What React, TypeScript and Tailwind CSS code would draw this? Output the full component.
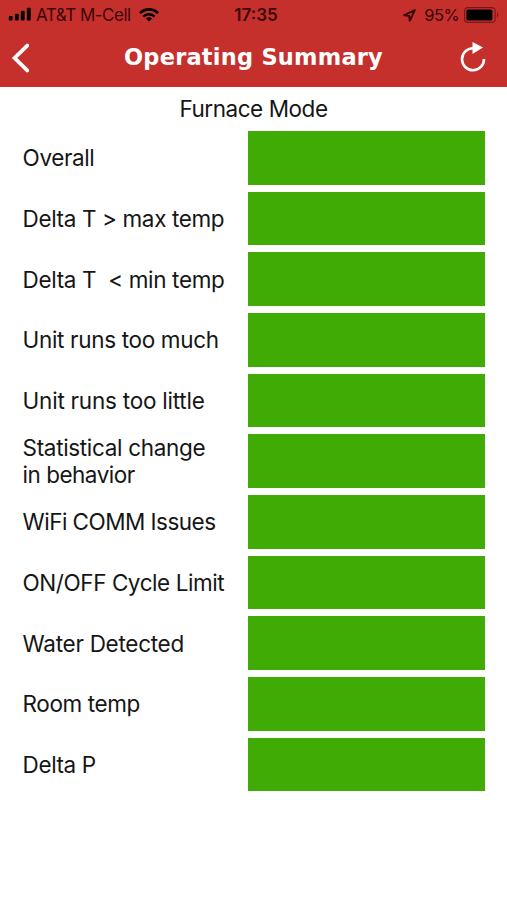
interface Check {
  lines: { text: string; tracking: string }[];
  ok: boolean;
}

const CHECKS: Check[] = [
  { lines: [{ text: 'Overall', tracking: 'tracking-[-0.4px]' }], ok: true },
  { lines: [{ text: 'Delta T > max temp', tracking: 'tracking-[-0.37px]' }], ok: true },
  { lines: [{ text: 'Delta T  < min temp', tracking: 'tracking-[-0.35px]' }], ok: true },
  { lines: [{ text: 'Unit runs too much', tracking: 'tracking-[-0.33px]' }], ok: true },
  { lines: [{ text: 'Unit runs too little', tracking: 'tracking-[-0.23px]' }], ok: true },
  {
    lines: [
      { text: 'Statistical change', tracking: 'tracking-[-0.33px]' },
      { text: 'in behavior', tracking: 'tracking-[-0.5px]' },
    ],
    ok: true,
  },
  { lines: [{ text: 'WiFi COMM Issues', tracking: 'tracking-[-0.53px]' }], ok: true },
  { lines: [{ text: 'ON/OFF Cycle Limit', tracking: 'tracking-[-0.44px]' }], ok: true },
  { lines: [{ text: 'Water Detected', tracking: 'tracking-[-0.28px]' }], ok: true },
  { lines: [{ text: 'Room temp', tracking: 'tracking-[-0.4px]' }], ok: true },
  { lines: [{ text: 'Delta P', tracking: 'tracking-[-0.4px]' }], ok: true },
];

function StatusBar() {
  return (
    <div className="grid h-[30px] grid-cols-[1fr_auto_1fr] items-center pl-2 pr-[7px] text-[17px] leading-none text-[#3a0505]">
      <div className="flex items-center">
        <svg className="mb-0.5 h-[14px] w-6" viewBox="0 0 24 14" fill="#000">
          <rect x="0.8" y="9" width="3.8" height="4.6" rx="1" />
          <rect x="6.9" y="6.8" width="3.8" height="6.8" rx="1" />
          <rect x="12.8" y="3.8" width="3.8" height="9.8" rx="1" />
          <rect x="18.9" y="0.8" width="3.8" height="12.8" rx="1" />
        </svg>
        <span className="ml-1 whitespace-nowrap tracking-[-0.5px]">AT&amp;T M-Cell</span>
        <svg className="mb-px ml-2 h-[14px] w-5" viewBox="0 0 20 14" fill="none" stroke="#000" strokeWidth="2.6">
          <path d="M1 5.2a12.6 12.6 0 0 1 18 0" />
          <path d="M4.4 8.6a8 8 0 0 1 11.2 0" />
          <path d="M10 13.6 6.9 10.6a4.4 4.4 0 0 1 6.2 0z" fill="#000" stroke="none" />
        </svg>
      </div>
      <span className="ml-1 font-semibold">17:35</span>
      <div className="flex items-center justify-end">
        <svg className="h-[13px] w-[13px]" viewBox="0 0 13 13" fill="none" stroke="#3a0505" strokeWidth="1.9" strokeLinejoin="round">
          <path d="M11.8 1.2 1.2 6.2l5 .7.6 5z" />
        </svg>
        <span className="ml-2 text-[16.5px] tracking-[-0.6px]">95%</span>
        <svg className="ml-[5px] h-4 w-9" viewBox="0 0 36 16">
          <rect x="0.6" y="0.6" width="30.5" height="14.8" rx="3.2" fill="none" stroke="#7c1717" strokeWidth="1.2" />
          <rect x="2.4" y="2.4" width="26" height="11.2" rx="1.5" fill="#000" />
          <path d="M33 5.5c1.8.5 1.8 4.5 0 5z" fill="#7c1717" />
        </svg>
      </div>
    </div>
  );
}

function Header() {
  return (
    <header className="h-[87px] bg-[#c5302d]">
      <StatusBar />
      <div className="flex h-[55px] items-center pl-[11px] pr-5">
        <button aria-label="Back">
          <svg className="h-[30px] w-[18px]" viewBox="0 0 18 30" fill="none" stroke="#fff" strokeWidth="3.8">
            <path d="M16.2 2.6 3.6 15l12.6 12.4" strokeLinecap="round" />
          </svg>
        </button>
        <h1 className="ml-[95px] whitespace-nowrap font-['DejaVu_Sans',sans-serif] text-[22.5px] font-bold leading-none tracking-[0.22px] text-white">
          Operating Summary
        </h1>
        <button aria-label="Refresh" className="mb-0.5 ml-auto">
          <svg className="h-[30px] w-7" viewBox="0 0 28 30">
            <path d="M14.2 6.2A11 11 0 1 0 25 17" fill="none" stroke="#fff" strokeWidth="2.6" />
            <path d="M13.5 0 24 5.6 13.5 12z" fill="#fff" />
          </svg>
        </button>
      </div>
    </header>
  );
}

export default function App() {
  return (
    <div className="h-[900px] w-[507px] overflow-hidden bg-white font-['Inter',sans-serif] text-[#161616]">
      <Header />
      <main>
        <h2 className="flex h-11 items-center justify-center text-[22.5px] leading-none tracking-[-0.45px]">
          <span>Furnace Mode</span>
        </h2>
        <ul className="flex flex-col gap-[7px] pl-[22.6px] pr-[22px]">
          {CHECKS.map((check) => (
            <li key={check.lines[0].text} className="flex h-[53.67px] items-center justify-between">
              <div className="text-[22.5px] leading-[27px]">
                {check.lines.map((line) => (
                  <p key={line.text} className={`whitespace-pre ${line.tracking}`}>
                    {line.text}
                  </p>
                ))}
              </div>
              <div className={`h-full w-[237px] shrink-0 ${check.ok ? 'bg-[#40ab05]' : 'bg-[#c5302d]'}`} />
            </li>
          ))}
        </ul>
      </main>
    </div>
  );
}
